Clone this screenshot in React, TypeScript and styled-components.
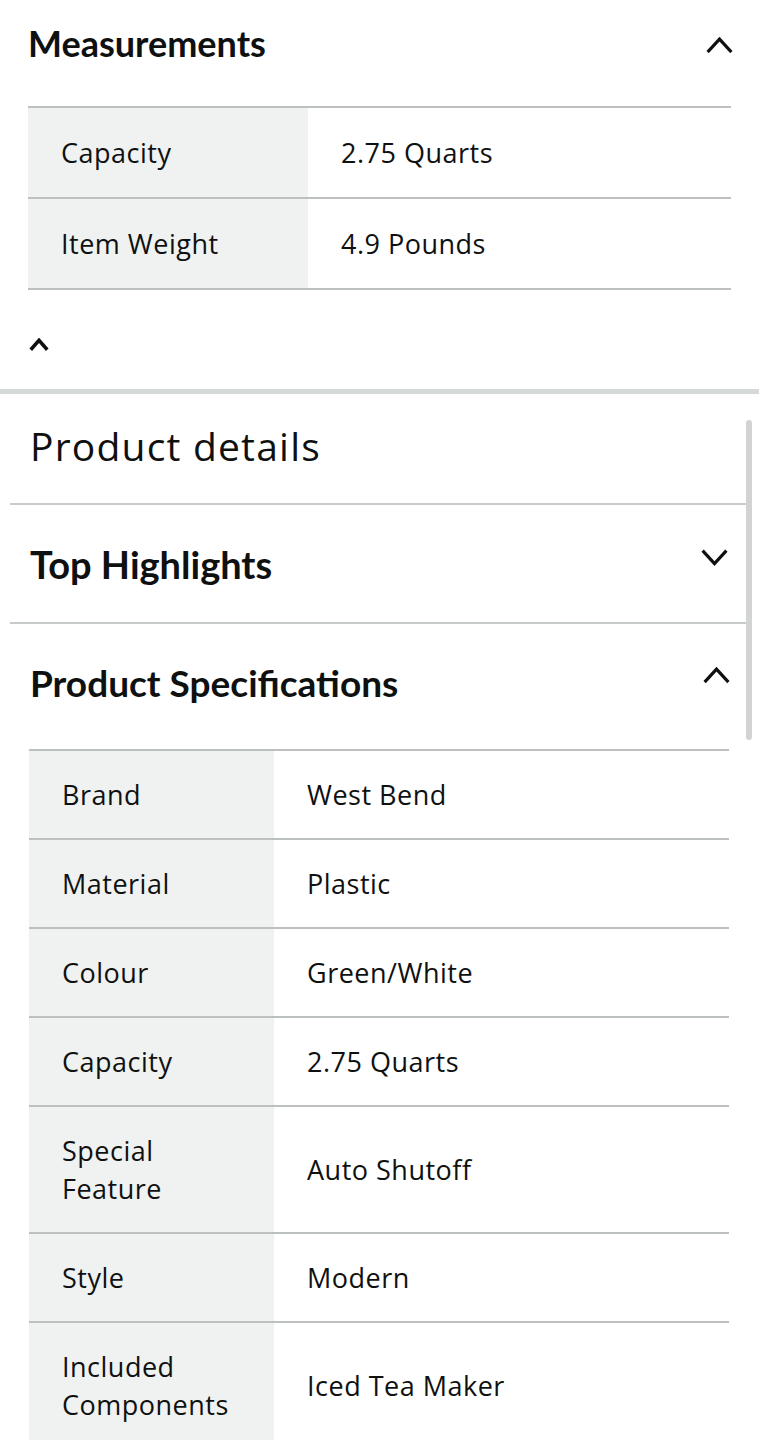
import React from "react";
import styled, { createGlobalStyle } from "styled-components";

const Global = createGlobalStyle`
  html, body { margin: 0; padding: 0; background: #ffffff; }
  body { font-family: "Open Sans", Lato, sans-serif; color: #0f1111; }
  * { box-sizing: border-box; }
`;

const Page = styled.div`
  width: 759px;
  overflow: hidden;
`;

const TopSection = styled.section`
  padding: 0 28px;
`;

const Header = styled.div<{ $h: number }>`
  height: ${(p) => p.$h}px;
  display: flex;
  align-items: center;
  justify-content: space-between;
`;

const BoldTitle = styled.h2<{ $size?: number }>`
  margin: 0;
  font-family: Lato, "Open Sans", sans-serif;
  font-size: ${(p) => p.$size ?? 37}px;
  font-weight: 700;
  line-height: 44px;
  color: #0f1111;
`;

const Table = styled.div<{ $mt: number }>`
  margin-top: ${(p) => p.$mt}px;
  border-top: 2px solid #bcc0c0;
`;

const Row = styled.div<{ $label: number; $pad: number }>`
  display: grid;
  grid-template-columns: ${(p) => p.$label}px 1fr;
  border-bottom: 2px solid #bcc0c0;
  & > div {
    padding-top: ${(p) => p.$pad}px;
    padding-bottom: ${(p) => p.$pad}px;
  }
`;

const Cell = styled.div`
  display: flex;
  align-items: center;
  padding-left: 33px;
  padding-right: 20px;
  font-size: 27px;
  letter-spacing: 0.5px;
  line-height: 38px;
  color: #0f1111;
`;

const LabelCell = styled(Cell)`
  background: #f0f2f2;
`;

const ValueCell = styled(Cell)`
  background: #ffffff;
`;

const CollapseBar = styled.div`
  height: 99px;
  display: flex;
  align-items: center;
  padding: 10px 0 0 1px;
`;

const SectionDivider = styled.div`
  height: 5px;
  background: #d5d9d9;
`;

const ScrollArea = styled.section`
  position: relative;
  margin-left: 10px;
  width: 738px;
`;

const Scrollbar = styled.div`
  position: absolute;
  right: -4px;
  top: 26px;
  width: 6px;
  height: 320px;
  border-radius: 3px;
  background: #d2d4d4;
`;

const DetailsTitle = styled.h1`
  margin: 0;
  height: 111px;
  display: flex;
  align-items: center;
  padding: 0 20px 6px;
  font-size: 39px;
  letter-spacing: 1.2px;
  font-weight: 400;
  color: #0f1111;
  border-bottom: 2px solid #c8cbcb;
`;

const Accordion = styled.div<{ $border?: boolean }>`
  height: ${(p) => (p.$border ? 119 : 117)}px;
  display: flex;
  align-items: center;
  justify-content: space-between;
  padding: 0 20px 0 20px;
  border-bottom: ${(p) => (p.$border ? "2px solid #c8cbcb" : "none")};
`;

const ChevronBox = styled.span<{ $dy: number }>`
  display: flex;
  transform: translateY(${(p) => p.$dy}px);
`;

const SpecWrap = styled.div`
  padding: 0 19px;
`;

const Chevron = ({ up, w = 27, sw = 3.2 }: { up: boolean; w?: number; sw?: number }) => {
  const h = w / 2 + sw;
  const pts = up
    ? `${sw / 2},${h - sw / 2} ${w / 2},${sw / 2 + 0.5} ${w - sw / 2},${h - sw / 2}`
    : `${sw / 2},${sw / 2} ${w / 2},${h - sw / 2 - 0.5} ${w - sw / 2},${sw / 2}`;
  return (
    <svg width={w} height={h} viewBox={`0 0 ${w} ${h}`}>
      <polyline points={pts} fill="none" stroke="#0f1111" strokeWidth={sw} strokeLinecap="butt" strokeLinejoin="miter" />
    </svg>
  );
};

const measurements = [
  ["Capacity", "2.75 Quarts"],
  ["Item Weight", "4.9 Pounds"],
];

const specs = [
  ["Brand", "West Bend"],
  ["Material", "Plastic"],
  ["Colour", "Green/White"],
  ["Capacity", "2.75 Quarts"],
  ["Special Feature", "Auto Shutoff"],
  ["Style", "Modern"],
  ["Included Components", "Iced Tea Maker"],
];

export default function App() {
  return (
    <Page>
      <Global />
      <TopSection>
        <Header $h={86}>
          <BoldTitle $size={36}>Measurements</BoldTitle>
          <ChevronBox $dy={2} style={{ marginRight: -2 }}>
            <Chevron up />
          </ChevronBox>
        </Header>
        <Table $mt={20}>
          {measurements.map(([k, v]) => (
            <Row key={k} $label={280} $pad={25.5}>
              <LabelCell>{k}</LabelCell>
              <ValueCell>{v}</ValueCell>
            </Row>
          ))}
        </Table>
        <CollapseBar>
          <Chevron up w={20} sw={3.5} />
        </CollapseBar>
      </TopSection>
      <SectionDivider />
      <ScrollArea>
        <Scrollbar />
        <DetailsTitle>Product details</DetailsTitle>
        <Accordion $border>
          <BoldTitle $size={38}>Top Highlights</BoldTitle>
          <ChevronBox $dy={-6}>
            <Chevron up={false} />
          </ChevronBox>
        </Accordion>
        <Accordion>
          <BoldTitle>Product Specifications</BoldTitle>
          <ChevronBox $dy={-7} style={{ marginRight: -2 }}>
            <Chevron up />
          </ChevronBox>
        </Accordion>
        <SpecWrap>
          <Table $mt={8}>
            {specs.map(([k, v]) => (
              <Row key={k} $label={245} $pad={24.5}>
                <LabelCell>{k}</LabelCell>
                <ValueCell>{v}</ValueCell>
              </Row>
            ))}
          </Table>
        </SpecWrap>
      </ScrollArea>
    </Page>
  );
}
